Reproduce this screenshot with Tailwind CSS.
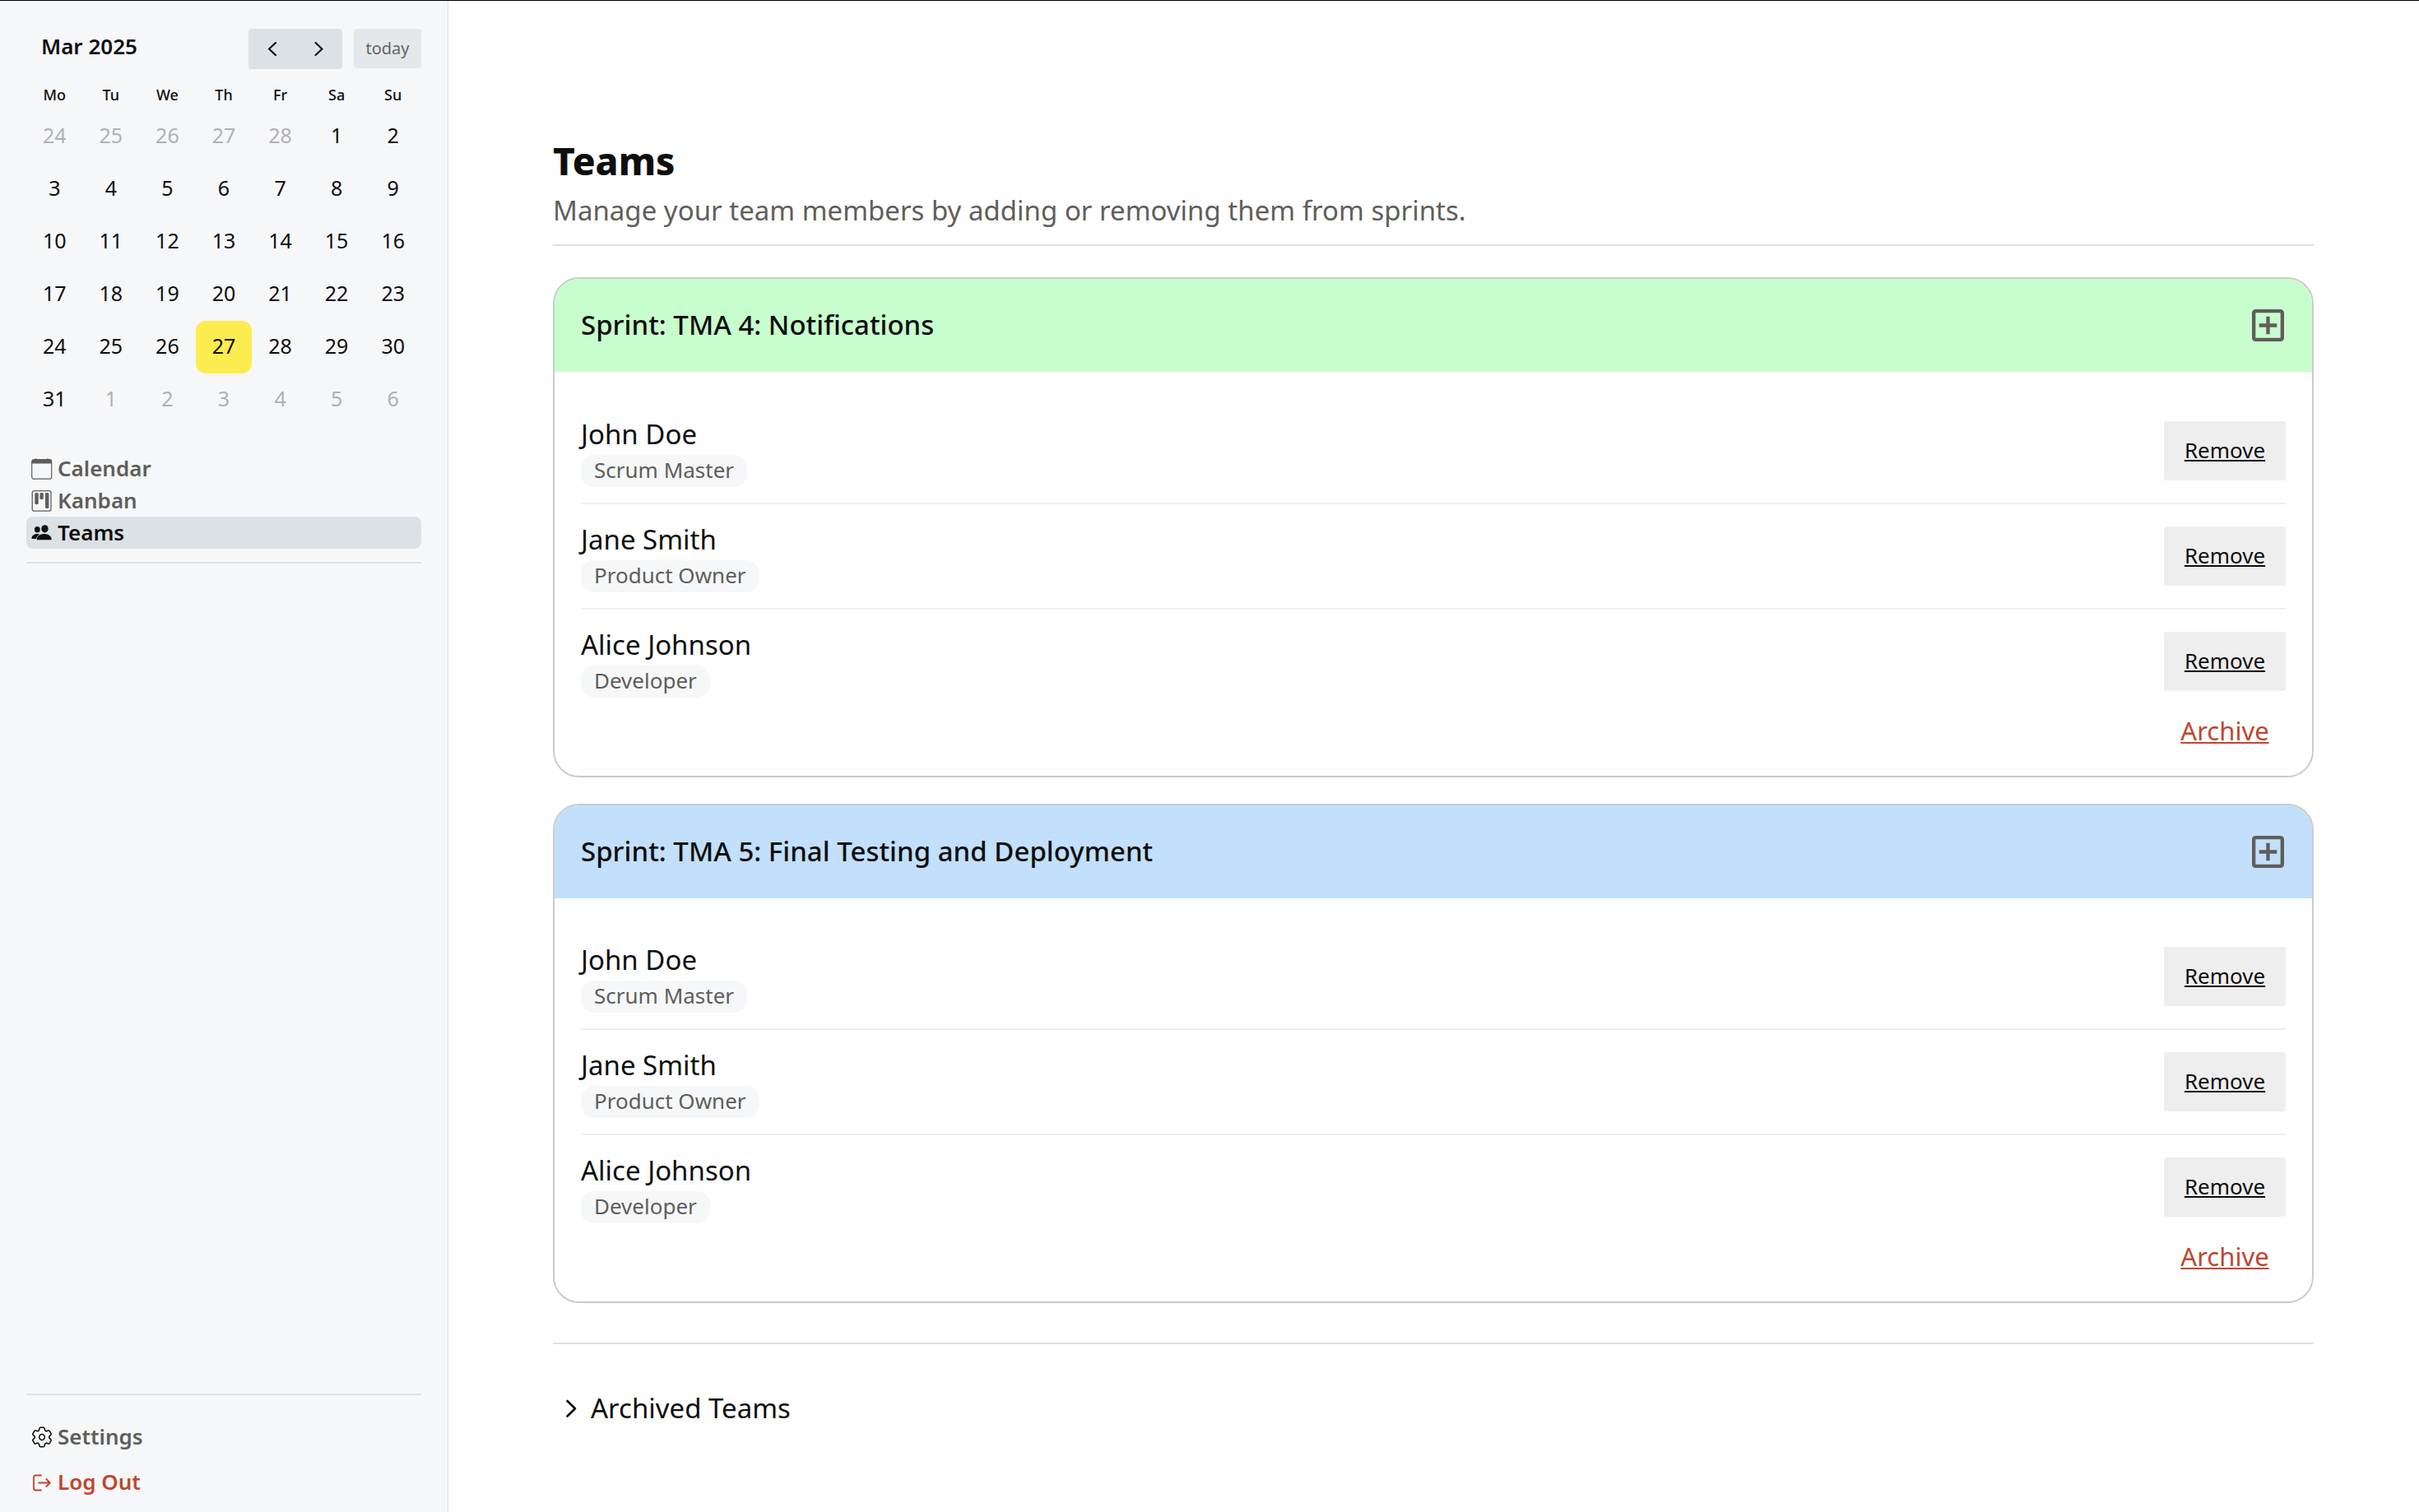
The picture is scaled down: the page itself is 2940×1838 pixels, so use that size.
<!DOCTYPE html>
<html lang="en">
<head>
<meta charset="utf-8">
<meta name="viewport" content="width=device-width, initial-scale=1">
<title>Teams</title>
<script src="https://cdn.jsdelivr.net/npm/@tailwindcss/browser@4"></script>
</head>
<body class="flex min-h-screen border-t border-black bg-white font-['Noto_Sans',sans-serif] text-[#0e0e0e]">

<aside class="flex w-[545px] shrink-0 flex-col border-r border-[#dce1e6] bg-[#f6f7f9] px-8 pt-[34px] pb-[9px]">
  <div class="mb-3 flex items-start">
    <h2 class="ml-[18px] text-[26px] leading-[42px] font-semibold">Mar 2025</h2>
    <div class="ml-auto flex h-[49px] rounded bg-[#dce1e6]">
      <button type="button" aria-label="Previous month" class="flex w-[57px] items-center justify-center">
        <svg class="h-5 w-5" viewBox="0 0 20 20" fill="none" stroke="currentColor" stroke-width="2.200" stroke-linecap="round" stroke-linejoin="round"><path d="M14 2 6 9.500l8 7.500"/></svg>
      </button>
      <button type="button" aria-label="Next month" class="flex w-[57px] items-center justify-center">
        <svg class="h-5 w-5" viewBox="0 0 20 20" fill="none" stroke="currentColor" stroke-width="2.200" stroke-linecap="round" stroke-linejoin="round"><path d="m5.500 2 8 7.500-8 7.500"/></svg>
      </button>
    </div>
    <button type="button" class="ml-3.5 h-12 w-[82px] rounded bg-[#e5e8ea] text-[20px] text-[#656666]">today</button>
  </div>

  <table class="w-full table-fixed text-center text-[25px]">
    <thead>
      <tr class="h-[38px] text-[18px] leading-6"><th class="p-0 font-medium">Mo</th><th class="p-0 font-medium">Tu</th><th class="p-0 font-medium">We</th><th class="p-0 font-medium">Th</th><th class="p-0 font-medium">Fr</th><th class="p-0 font-medium">Sa</th><th class="p-0 font-medium">Su</th></tr>
    </thead>
    <tbody>
      <tr class="h-16"><td class="pb-0.5 text-[#b0b1b2]">24</td><td class="pb-0.5 text-[#b0b1b2]">25</td><td class="pb-0.5 text-[#b0b1b2]">26</td><td class="pb-0.5 text-[#b0b1b2]">27</td><td class="pb-0.5 text-[#b0b1b2]">28</td><td class="pb-0.5">1</td><td class="pb-0.5">2</td></tr>
      <tr class="h-16"><td class="pb-0.5">3</td><td class="pb-0.5">4</td><td class="pb-0.5">5</td><td class="pb-0.5">6</td><td class="pb-0.5">7</td><td class="pb-0.5">8</td><td class="pb-0.5">9</td></tr>
      <tr class="h-16"><td class="pb-0.5">10</td><td class="pb-0.5">11</td><td class="pb-0.5">12</td><td class="pb-0.5">13</td><td class="pb-0.5">14</td><td class="pb-0.5">15</td><td class="pb-0.5">16</td></tr>
      <tr class="h-16"><td class="pb-0.5">17</td><td class="pb-0.5">18</td><td class="pb-0.5">19</td><td class="pb-0.5">20</td><td class="pb-0.5">21</td><td class="pb-0.5">22</td><td class="pb-0.5">23</td></tr>
      <tr class="h-16"><td class="pb-0.5">24</td><td class="pb-0.5">25</td><td class="pb-0.5">26</td><td class="rounded-xl bg-[#fcec4f] pb-0.5">27</td><td class="pb-0.5">28</td><td class="pb-0.5">29</td><td class="pb-0.5">30</td></tr>
      <tr class="h-16"><td class="pb-0.5">31</td><td class="pb-0.5 text-[#b0b1b2]">1</td><td class="pb-0.5 text-[#b0b1b2]">2</td><td class="pb-0.5 text-[#b0b1b2]">3</td><td class="pb-0.5 text-[#b0b1b2]">4</td><td class="pb-0.5 text-[#b0b1b2]">5</td><td class="pb-0.5 text-[#b0b1b2]">6</td></tr>
    </tbody>
  </table>

  <nav class="mt-8 border-b-2 border-[#dce1e6] pb-4 text-[26px] leading-[39px] font-semibold text-[#5f5e5a]">
    <a href="#" class="flex items-center gap-1.5 rounded-lg px-1.5">
      <svg class="h-[26px] w-[26px]" viewBox="0 0 26 26" fill="none" stroke="currentColor"><rect x=".7" y="1.700" width="24" height="23.500" rx="2.500" stroke-width="1.200"/><path d="M.7 6.500V4a2.300 2.300 0 0 1 2.300-2.300h19.400A2.300 2.300 0 0 1 24.700 4v2.500z" fill="currentColor" stroke="none"/><path d="M5.500 0v3M20 0v3"/></svg>
      Calendar
    </a>
    <a href="#" class="flex items-center gap-1.5 rounded-lg px-1.5">
      <svg class="h-[26px] w-[26px]" viewBox="0 0 26 26" fill="currentColor"><rect x="1.200" y=".7" width="22.800" height="24.500" rx="2.500" fill="none" stroke="currentColor" stroke-width="1.300"/><rect x="4.300" y="3" width="4.400" height="14.200" rx="1.600"/><rect x="10.400" y="3" width="4.400" height="8" rx="1.600"/><rect x="17" y="3" width="4.400" height="19" rx="1.600"/></svg>
      Kanban
    </a>
    <a href="#" aria-current="page" class="flex items-center gap-1.5 rounded-lg bg-[#dce1e6] px-1.5 text-[#0e0e0e]">
      <svg class="h-[26px] w-[26px]" viewBox="0 0 26 26" fill="currentColor"><ellipse cx="16.500" cy="7.800" rx="4.200" ry="4.600"/><path d="M8.500 21.300c-.8 0-1.200-.6-1-1.400.9-3.800 4.800-5.900 9-5.900s8.100 2.100 9 5.900c.1.800-.2 1.400-1 1.400z" transform="translate(-.8 0)"/><ellipse cx="7.300" cy="8.800" rx="3.400" ry="3.800"/><path d="M10.300 14.600c-1-.4-2-.6-3.100-.6C4 14 1.100 15.800.4 18.700c-.2.700.3 1.200.9 1.200h4.600c.7-2.300 2.200-4.100 4.400-5.300z"/></svg>
      Teams
    </a>
  </nav>

  <div class="mt-auto border-t-2 border-[#dce1e6] pt-[23px] text-[26px] leading-[55px] font-semibold">
    <a href="#" class="flex items-center gap-1.5 px-1.5 text-[#5f5e5a]">
      <svg class="h-[26px] w-[26px] text-[#0e0e0e]" viewBox="2 2 20 20" fill="none" stroke="currentColor" stroke-width="1.200" stroke-linecap="round" stroke-linejoin="round"><path d="M9.594 3.94c.09-.542.56-.94 1.11-.94h2.593c.55 0 1.02.398 1.11.94l.213 1.281c.063.374.313.686.645.87.074.04.147.083.22.127.325.196.72.257 1.075.124l1.217-.456a1.125 1.125 0 0 1 1.37.49l1.296 2.247a1.125 1.125 0 0 1-.26 1.431l-1.003.827c-.293.241-.438.613-.43.992a7.723 7.723 0 0 1 0 .255c-.008.378.137.75.43.991l1.004.827c.424.35.534.955.26 1.43l-1.298 2.247a1.125 1.125 0 0 1-1.369.491l-1.217-.456c-.355-.133-.75-.072-1.076.124a6.47 6.47 0 0 1-.22.128c-.331.183-.581.495-.644.869l-.213 1.281c-.09.543-.56.94-1.11.94h-2.594c-.55 0-1.019-.398-1.11-.94l-.213-1.281c-.062-.374-.312-.686-.644-.87a6.52 6.52 0 0 1-.22-.127c-.325-.196-.72-.257-1.076-.124l-1.217.456a1.125 1.125 0 0 1-1.369-.49l-1.297-2.247a1.125 1.125 0 0 1 .26-1.431l1.004-.827c.292-.24.437-.613.43-.991a6.932 6.932 0 0 1 0-.255c.007-.38-.138-.751-.43-.992l-1.004-.827a1.125 1.125 0 0 1-.26-1.43l1.297-2.247a1.125 1.125 0 0 1 1.37-.491l1.216.456c.356.133.751.072 1.076-.124.072-.044.146-.086.22-.128.332-.183.582-.495.644-.869l.214-1.28Z"/><ellipse cx="12" cy="12" rx="2.500" ry="2.700"/></svg>
      Settings
    </a>
    <a href="#" class="flex items-center gap-1.5 px-1.5 text-[#c0462f]">
      <svg class="h-[26px] w-[26px]" viewBox="0 0 26 26" fill="none" stroke="currentColor" stroke-width="1.800" stroke-linejoin="round"><path d="M12.700 4.500H5A2 2 0 0 0 3 6.500v14a2 2 0 0 0 2 2h7.700M8.500 13.500h14M17.800 8.500l5 5-5 5"/></svg>
      Log Out
    </a>
  </div>
</aside>

<main class="min-w-0 flex-1 pt-[159px] pr-32 pl-[127px]">
  <header class="mb-[38px] border-b-2 border-[#dce1e6] pb-4">
    <h1 class="text-[46px] leading-[70px] font-extrabold">Teams</h1>
    <p class="text-[33px] leading-[51px] text-[#5f5e5a]">Manage your team members by adding or removing them from sprints.</p>
  </header>

  <section class="mb-8 overflow-hidden rounded-[32px] border-2 border-[#cbcbcb]">
    <div class="flex h-[113px] items-center justify-between bg-[#c8fdcd] px-8">
      <h2 class="pb-0.5 text-[33px] leading-[50px] font-medium">Sprint: TMA 4: Notifications</h2>
      <button type="button" aria-label="Add member" class="flex h-11 w-11 items-center justify-center text-[#5f5e5a]">
        <svg class="h-[39px] w-[39px]" viewBox="3 3 18 18" fill="currentColor"><path d="M19 3H5c-1.110 0-2 .9-2 2v14c0 1.100.89 2 2 2h14c1.100 0 2-.9 2-2V5c0-1.100-.9-2-2-2zm0 16H5V5h14v14zm-8-2h2v-4h4v-2h-4V7h-2v4H7v2h4z"/></svg>
      </button>
    </div>
    <div class="px-8 pt-[33px] pb-8">
      <ul class="divide-y-2 divide-[#eeeeee]">
        <li class="flex items-center justify-between py-[19px]">
          <div>
            <p class="mb-px text-[33px] leading-[48px]">John Doe</p>
            <p class="w-fit rounded-2xl bg-[#f6f7f9] px-4 pb-[3px] text-[26px] leading-9 text-[#5f5e5a]">Scrum Master</p>
          </div>
          <button type="button" class="h-[72px] w-[148px] rounded-[3px] bg-[#eeeeee] pb-0.5 text-[26px] underline decoration-2 underline-offset-2">Remove</button>
        </li>
        <li class="flex items-center justify-between py-[19px]">
          <div>
            <p class="mb-px text-[33px] leading-[48px]">Jane Smith</p>
            <p class="w-fit rounded-2xl bg-[#f6f7f9] px-4 pb-[3px] text-[26px] leading-9 text-[#5f5e5a]">Product Owner</p>
          </div>
          <button type="button" class="h-[72px] w-[148px] rounded-[3px] bg-[#eeeeee] pb-0.5 text-[26px] underline decoration-2 underline-offset-2">Remove</button>
        </li>
        <li class="flex items-center justify-between py-[19px]">
          <div>
            <p class="mb-px text-[33px] leading-[48px]">Alice Johnson</p>
            <p class="w-fit rounded-2xl bg-[#f6f7f9] px-4 pb-[3px] text-[26px] leading-9 text-[#5f5e5a]">Developer</p>
          </div>
          <button type="button" class="h-[72px] w-[148px] rounded-[3px] bg-[#eeeeee] pb-0.5 text-[26px] underline decoration-2 underline-offset-2">Remove</button>
        </li>
      </ul>
      <button type="button" class="ml-auto block h-11 w-[148px] pb-0.5 text-[31px] leading-[42px] text-[#c0462f] underline decoration-2 underline-offset-2">Archive</button>
    </div>
  </section>

  <section class="mb-12 overflow-hidden rounded-[32px] border-2 border-[#cbcbcb]">
    <div class="flex h-[113px] items-center justify-between bg-[#c2dffb] px-8">
      <h2 class="pb-0.5 text-[33px] leading-[50px] font-medium">Sprint: TMA 5: Final Testing and Deployment</h2>
      <button type="button" aria-label="Add member" class="flex h-11 w-11 items-center justify-center text-[#5f5e5a]">
        <svg class="h-[39px] w-[39px]" viewBox="3 3 18 18" fill="currentColor"><path d="M19 3H5c-1.110 0-2 .9-2 2v14c0 1.100.89 2 2 2h14c1.100 0 2-.9 2-2V5c0-1.100-.9-2-2-2zm0 16H5V5h14v14zm-8-2h2v-4h4v-2h-4V7h-2v4H7v2h4z"/></svg>
      </button>
    </div>
    <div class="px-8 pt-8 pb-8">
      <ul class="divide-y-2 divide-[#eeeeee]">
        <li class="flex items-center justify-between py-[19px]">
          <div>
            <p class="mb-px text-[33px] leading-[48px]">John Doe</p>
            <p class="w-fit rounded-2xl bg-[#f6f7f9] px-4 pb-[3px] text-[26px] leading-9 text-[#5f5e5a]">Scrum Master</p>
          </div>
          <button type="button" class="h-[72px] w-[148px] rounded-[3px] bg-[#eeeeee] pb-0.5 text-[26px] underline decoration-2 underline-offset-2">Remove</button>
        </li>
        <li class="flex items-center justify-between py-[19px]">
          <div>
            <p class="mb-px text-[33px] leading-[48px]">Jane Smith</p>
            <p class="w-fit rounded-2xl bg-[#f6f7f9] px-4 pb-[3px] text-[26px] leading-9 text-[#5f5e5a]">Product Owner</p>
          </div>
          <button type="button" class="h-[72px] w-[148px] rounded-[3px] bg-[#eeeeee] pb-0.5 text-[26px] underline decoration-2 underline-offset-2">Remove</button>
        </li>
        <li class="flex items-center justify-between py-[19px]">
          <div>
            <p class="mb-px text-[33px] leading-[48px]">Alice Johnson</p>
            <p class="w-fit rounded-2xl bg-[#f6f7f9] px-4 pb-[3px] text-[26px] leading-9 text-[#5f5e5a]">Developer</p>
          </div>
          <button type="button" class="h-[72px] w-[148px] rounded-[3px] bg-[#eeeeee] pb-0.5 text-[26px] underline decoration-2 underline-offset-2">Remove</button>
        </li>
      </ul>
      <button type="button" class="ml-auto block h-11 w-[148px] pb-0.5 text-[31px] leading-[42px] text-[#c0462f] underline decoration-2 underline-offset-2">Archive</button>
    </div>
  </section>

  <div class="border-t-2 border-[#dce1e6] pt-[53px]">
    <button type="button" aria-expanded="false" class="flex items-center gap-2.5 pl-2.5 text-[33px] leading-[50px]">
      <svg class="h-[26px] w-[26px]" viewBox="0 0 26 26" fill="none" stroke="currentColor" stroke-width="2.600" stroke-linecap="round" stroke-linejoin="round"><path d="m7.500 4 9.500 9.200L7.500 22.500"/></svg>
      Archived Teams
    </button>
  </div>
</main>

</body>
</html>
